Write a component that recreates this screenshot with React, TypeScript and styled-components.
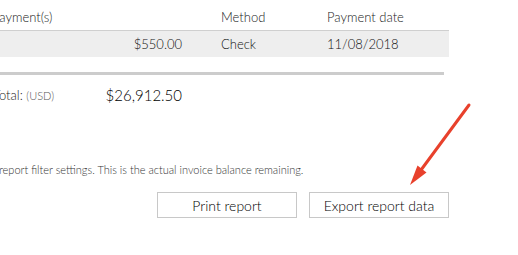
import * as React from 'react'
import styled, { createGlobalStyle } from 'styled-components'

const GlobalStyle = createGlobalStyle`
  html, body {
    margin: 0;
    padding: 0;
    background: #fff;
    overflow: hidden;
  }
  body {
    font-family: Lato, "Open Sans", sans-serif;
    font-weight: 300;
    color: #111;
  }
`

const payments = [{ amount: '$550.00', method: 'Check', date: '11/08/2018' }]

const App: React.FC = () => {
  return (
    <>
      <GlobalStyle />
      <StyledReport>
        <Table>
          <HeaderRow>
            <Cell>Payment(s)</Cell>
            <Cell />
            <Cell>Method</Cell>
            <Cell>Payment date</Cell>
          </HeaderRow>
          {payments.map((p, i) => (
            <BodyRow key={i}>
              <Cell />
              <Cell align="right">{p.amount}</Cell>
              <Cell>{p.method}</Cell>
              <Cell>{p.date}</Cell>
            </BodyRow>
          ))}
        </Table>
        <Rule />
        <TotalRow>
          <TotalLabel>
            Total: <small>(USD)</small>
          </TotalLabel>
          <TotalValue>$26,912.50</TotalValue>
        </TotalRow>
        <Footnote>
          report filter settings. This is the actual invoice balance remaining.
        </Footnote>
        <Actions>
          <Button>Print report</Button>
          <Button>Export report data</Button>
        </Actions>
      </StyledReport>
      <Arrow width="518" height="255" viewBox="0 0 518 255">
        <line
          x1="469"
          y1="105"
          x2="421"
          y2="170"
          stroke="#e8412c"
          strokeWidth="3"
          strokeLinecap="round"
        />
        <polygon points="410,185 426.5,172.5 417.5,165.5" fill="#e8412c" />
      </Arrow>
    </>
  )
}

export default App

const StyledReport = styled.div`
  width: 457px;
  margin-left: -8px;
`

const Table = styled.div`
  display: flex;
  flex-direction: column;
`

const Row = styled.div`
  display: grid;
  grid-template-columns: 110px 80px 106px 161px;
  align-items: center;
  height: 26px;
  font-size: 13px;

  & > *:nth-child(3),
  & > *:nth-child(4) {
    padding-left: 39px;
  }
`

const HeaderRow = styled(Row)`
  padding-top: 4px;
  border-bottom: 1px solid #cfcfcf;
  color: #222;
`

const BodyRow = styled(Row)`
  background: #eeeeee;
  color: #111;
`

const Cell = styled.div<{ align?: 'left' | 'right' }>`
  text-align: ${(p) => p.align || 'left'};
  white-space: nowrap;
  box-sizing: border-box;
`

const Rule = styled.div`
  margin-top: 15px;
  height: 3px;
  width: 452px;
  background: #cccccc;
`

const TotalRow = styled.div`
  margin-top: 10px;
  height: 20px;
  width: 190px;
  display: flex;
  align-items: center;
  justify-content: space-between;
  padding-left: 1px;
  box-sizing: border-box;
`

const TotalLabel = styled.div`
  font-size: 13px;
  color: #222;

  small {
    font-size: 11px;
    color: #555;
  }
`

const TotalValue = styled.div`
  font-size: 15px;
  color: #000;
`

const Footnote = styled.p`
  margin: 58px 0 0 7px;
  font-size: 11px;
  line-height: 14px;
  color: #333;
  white-space: nowrap;
`

const Actions = styled.div`
  margin-top: 15px;
  display: flex;
  justify-content: flex-end;
  gap: 12px;
`

const Button = styled.button`
  width: 140px;
  height: 26px;
  background: #fff;
  border: 1px solid #c8c8c8;
  border-radius: 0;
  font-family: Lato, "Open Sans", sans-serif;
  font-weight: 300;
  font-size: 14px;
  color: #000;
  padding: 0;
  cursor: pointer;
`

const Arrow = styled.svg`
  position: absolute;
  left: 0;
  top: 0;
  pointer-events: none;
`
